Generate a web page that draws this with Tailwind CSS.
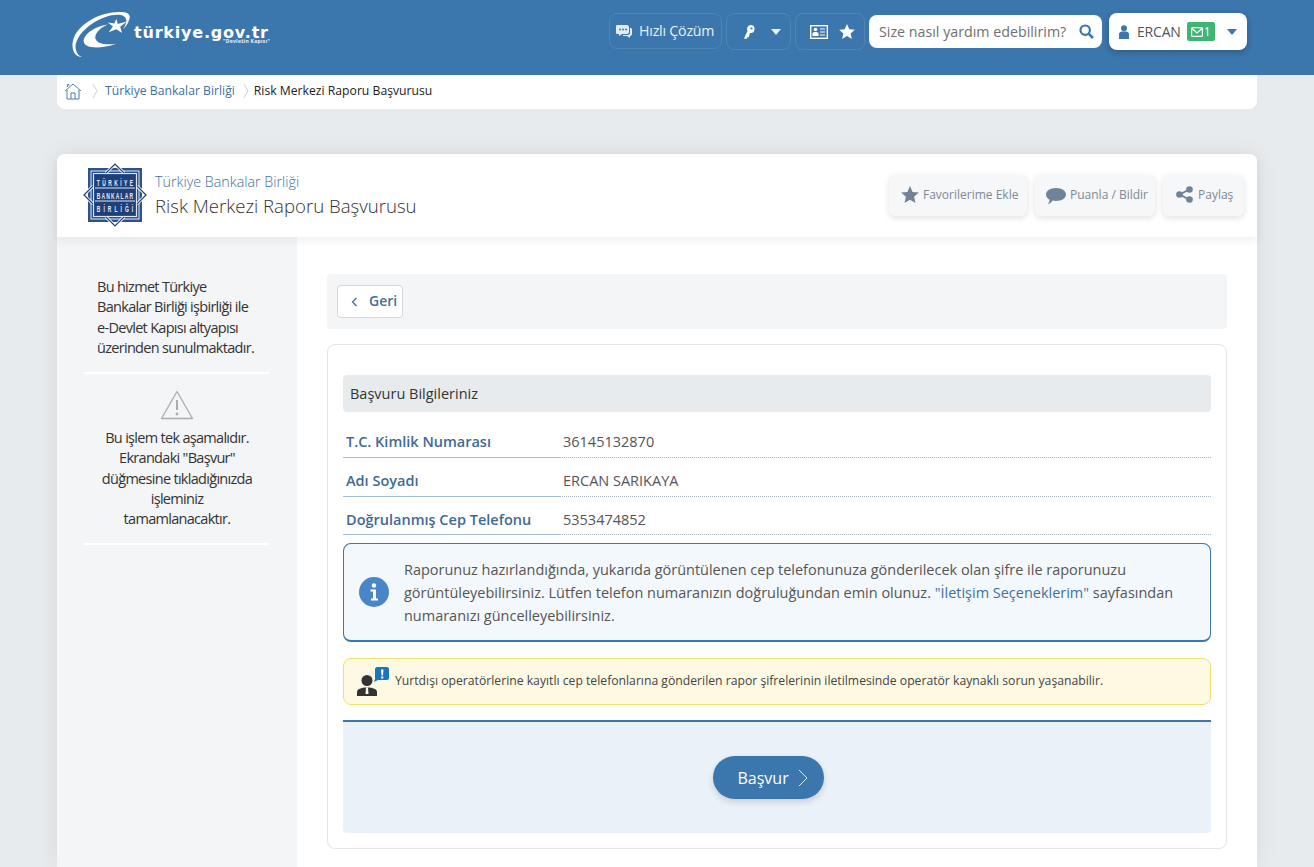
<!DOCTYPE html>
<html lang="tr">
<head>
  <meta charset="UTF-8">
  <meta name="viewport" content="width=device-width, initial-scale=1.0">
  <title>Risk Merkezi Raporu Başvurusu</title>
  <script src="https://cdn.jsdelivr.net/npm/@tailwindcss/browser@4"></script>
</head>
<body class="bg-[#e8ebed] font-['Open_Sans',sans-serif] h-[867px] overflow-hidden text-[#444]">
  <!-- Header -->
  <header class="bg-[#3b76ad] h-[75px]">
    <div class="w-[1200px] mx-auto flex items-start relative h-full">
      <a class="flex items-start ml-[13px] mt-[10px] relative w-[205px] h-[50px]">
        <svg width="60" height="46" viewBox="0 0 62 48" class="mt-[2px] ml-[1px]">
          <path d="M10 47C2 46 -1 36 3 26C9 12 30 0 50 0C59 -0.500 63 3 60 9C59 12 57 15 54 18C58 12 59 7 54 4C48 1 34 4 22 12C10 20 2 32 5 40C6 44 8 46 11 47Z" fill="#fff"/>
          <path d="M38 13C24 15 12 24 13 31C14 38 30 39 47 33C36 35 26 33 25 27C25 21 31 16 38 13Z" fill="#fff"/>
          <path d="M47 7L48.500 12.500L58 10L51 15.500L53 22L47 18L39 21L43.500 15L38 11L45 12Z" fill="#fff"/>
        </svg>
        <span class="absolute left-[64px] top-[18px] font-['DejaVu_Sans',sans-serif] font-bold text-[16px] leading-[10px] tracking-[0.8px] text-white whitespace-nowrap">türkiye.gov.tr</span>
        <span class="absolute left-[153px] top-[29px] text-[5px] leading-[4px] tracking-[0.3px] text-white/90 whitespace-nowrap font-bold">"Devletin Kapısı"</span>
      </a>
      <div class="ml-auto mr-[10px] mt-[13px] flex items-start">
        <a class="h-[36px] w-[113px] border border-white/10 rounded-[8px] flex items-center pl-[5px] text-[#e9f0f6] text-[14.200px] tracking-[-0.2px] whitespace-nowrap">
          <svg width="18" height="18" viewBox="0 0 18 18" class="mr-[6px]"><path d="M2 3H12C13 3 14 4 14 5V10C14 11 13 12 12 12H7L4 14V12H2C1 12 1 11 1 10V5C1 4 1 3 2 3Z" fill="#e3ebf3"/><path d="M15 6H16C17 6 17 7 17 8V12C17 13 16 14 15 14V16L12 14H8L8 13H13C14 13 15 12 15 11Z" fill="#e3ebf3"/><circle cx="5" cy="7.500" r="1" fill="#3b76ad"/><circle cx="8" cy="7.500" r="1" fill="#3b76ad"/><circle cx="11" cy="7.500" r="1" fill="#3b76ad"/></svg>
          Hızlı Çözüm
        </a>
        <a class="ml-[4px] h-[37px] w-[65px] border border-white/10 rounded-[8px] flex items-center pl-[15px]">
          <svg width="14" height="16" viewBox="0 0 14 16"><path d="M9 1A4 4 0 0 0 5.500 7L2 14.500L4.500 15L5.500 13L6.500 13.500L8 9A4 4 0 1 0 9 1Z" fill="#fff"/><circle cx="9.500" cy="4.500" r="1.100" fill="#3b76ad"/></svg>
          <svg width="10" height="6" viewBox="0 0 10 6" class="ml-[15px]"><path d="M0 0H10L5 6Z" fill="#e9f0f6"/></svg>
        </a>
        <a class="ml-[4px] h-[37px] w-[70px] border border-white/10 rounded-[8px] flex items-center pl-[14px]">
          <svg width="18" height="14" viewBox="0 0 18 14"><rect x="0.700" y="0.700" width="16.600" height="12.600" fill="none" stroke="#fff" stroke-width="1.400"/><circle cx="5.500" cy="4.500" r="1.800" fill="#fff"/><path d="M2.500 11V8.500C2.500 7.500 4 7 5.500 7C7 7 8.500 7.500 8.500 8.500V11Z" fill="#fff"/><path d="M10 4H15M10 7H15M10 10H15" stroke="#fff" stroke-width="1.200"/></svg>
          <svg width="16" height="15" viewBox="0 0 24 23" class="ml-[11px]"><path d="M12 0L15.500 8L24 8.800L17.500 14.500L19.500 23L12 18.500L4.500 23L6.500 14.500L0 8.800L8.500 8Z" fill="#fff"/></svg>
        </a>
        <div class="ml-[4px] mt-[2px] h-[33px] w-[233px] bg-white rounded-[8px] flex items-center pl-[10px] pr-[8px] text-[14.250px] text-[#6f6f6f] whitespace-nowrap">
          <span>Size nasıl yardım edebilirim?</span>
          <svg width="15" height="15" viewBox="0 0 15 15" class="ml-auto"><circle cx="6.200" cy="6.200" r="4.700" fill="none" stroke="#3b76ad" stroke-width="2.200"/><path d="M9.800 9.800L14 14" stroke="#3b76ad" stroke-width="2.600"/></svg>
        </div>
        <div class="ml-[7px] h-[37px] w-[138px] bg-white rounded-[8px] shadow-[0_2px_6px_rgba(0,0,0,0.25)] flex items-center pl-[10px] text-[14px] text-[#555] whitespace-nowrap">
          <svg width="10" height="14" viewBox="0 0 10 14"><circle cx="5" cy="3.200" r="3" fill="#3b76ad"/><path d="M0 14V9C0 7 2 6.500 5 6.500C8 6.500 10 7 10 9V14Z" fill="#3b76ad"/></svg>
          <span class="ml-[8px] tracking-[-0.2px]">ERCAN</span>
          <span class="ml-[6px] h-[19px] w-[28px] rounded-[2px] bg-[#3fb573] flex items-center justify-center text-white text-[12px] gap-[1px]">
            <svg width="12" height="10" viewBox="0 0 12 10"><rect x="0.600" y="0.600" width="10.800" height="8.800" rx="1" fill="none" stroke="#fff" stroke-width="1.200"/><path d="M1 1.500L6 6L11 1.500" fill="none" stroke="#fff" stroke-width="1.200"/></svg>
            1
          </span>
          <svg width="10" height="6" viewBox="0 0 10 6" class="ml-[12px]"><path d="M0 0H10L5 6Z" fill="#3b76ad"/></svg>
        </div>
      </div>
    </div>
  </header>

  <div class="w-[1200px] mx-auto">
    <!-- Breadcrumb -->
    <nav class="bg-white h-[34px] rounded-b-[8px] flex items-center pb-[2px] pl-[7px] text-[12.200px] whitespace-nowrap">
      <svg width="18" height="18" viewBox="0 0 18 18" fill="none" stroke="#4f7ea8" stroke-width="1"><path d="M1 9L9 2L17 9M3 8V17H15V8M7 17V11H11V17M3.500 5V2.500H5V3.700"/></svg>
      <svg width="6" height="18" viewBox="0 0 6 18" fill="none" stroke="#ccd3d9" class="ml-[10px]"><path d="M1 2L5 9L1 16"/></svg>
      <a class="ml-[7px] text-[#3f709e]">Türkiye Bankalar Birliği</a>
      <svg width="6" height="18" viewBox="0 0 6 18" fill="none" stroke="#ccd3d9" class="ml-[8px]"><path d="M1 2L5 9L1 16"/></svg>
      <span class="ml-[5px] text-[#222]">Risk Merkezi Raporu Başvurusu</span>
    </nav>

    <!-- Main card -->
    <main class="mt-[45px] bg-white rounded-t-[8px] shadow-[0_0_24px_rgba(0,0,0,0.07)]">
      <div class="h-[83px] relative z-10 bg-white rounded-t-[8px] shadow-[0_4px_10px_rgba(0,0,0,0.06)] flex items-start pl-[26px]">
        <svg width="64" height="64" viewBox="0 0 64 64" class="mt-[9px] shrink-0">
          <rect x="5" y="5" width="54" height="54" fill="#2c5290"/>
          <rect x="8" y="8" width="48" height="48" fill="none" stroke="#dfe8f3" stroke-width="1"/>
          <rect x="10.500" y="10.500" width="43" height="43" fill="none" stroke="#dfe8f3" stroke-width="1"/>
          <rect x="12" y="12" width="40" height="40" fill="#1f3f78"/>
          <path d="M23 10L32 1L41 10M10 23L1 32L10 41M54 23L63 32L54 41M23 54L32 63L41 54" fill="none" stroke="#fff" stroke-width="3"/>
          <path d="M23 10L32 1L41 10M10 23L1 32L10 41M54 23L63 32L54 41M23 54L32 63L41 54" fill="none" stroke="#1f4178" stroke-width="1.200"/>
          <path d="M12 25H52M12 38H52" stroke="#dfe8f3" stroke-width="1"/>
          <g font-family="Liberation Sans" font-weight="700" font-size="9" fill="#e8eef6" text-anchor="middle">
            <text transform="translate(32 22.500) scale(0.55 1)" textLength="66" lengthAdjust="spacing">TÜRKİYE</text>
            <text transform="translate(32 35.500) scale(0.55 1)" textLength="66" lengthAdjust="spacing">BANKALAR</text>
            <text transform="translate(32 48.500) scale(0.55 1)" textLength="66" lengthAdjust="spacing">BİRLİĞİ</text>
          </g>
        </svg>
        <div class="ml-[8px] mt-[18px]">
          <div class="text-[14.300px] leading-[19px] font-light text-[#3f709e]">Türkiye Bankalar Birliği</div>
          <h1 class="mt-[2px] text-[18.600px] leading-[25px] font-light text-[#333]">Risk Merkezi Raporu Başvurusu</h1>
        </div>
        <div class="ml-auto mr-[13px] mt-[21px] flex gap-[8px] text-[12px] text-[#7d8a96] whitespace-nowrap">
          <a class="h-[41px] w-[138px] bg-[#f5f7f9] rounded-[6px] shadow-[0_2px_6px_rgba(0,0,0,0.12)] flex items-center pb-[2px] pl-[12px] gap-[4px]">
            <svg width="18" height="17" viewBox="0 0 24 23"><path d="M12 0L15.500 8L24 8.800L17.500 14.500L19.500 23L12 18.500L4.500 23L6.500 14.500L0 8.800L8.500 8Z" fill="#6f8496"/></svg>
            Favorilerime Ekle
          </a>
          <a class="h-[41px] w-[120px] bg-[#f5f7f9] rounded-[6px] shadow-[0_2px_6px_rgba(0,0,0,0.12)] flex items-center pb-[2px] pl-[11px] gap-[4px]">
            <svg width="20" height="17" viewBox="0 0 20 17" class="mt-[3px]"><path d="M10 0C15.500 0 20 2.800 20 6.500C20 10.200 15.500 13 10 13C8.800 13 7.700 12.900 6.700 12.600C5.500 14.500 3.500 16 1.500 16.500C2.800 15 3.500 13.500 3.600 11.700C1.400 10.500 0 8.600 0 6.500C0 2.800 4.500 0 10 0Z" fill="#6f8496"/></svg>
            Puanla / Bildir
          </a>
          <a class="h-[41px] w-[81px] bg-[#f5f7f9] rounded-[6px] shadow-[0_2px_6px_rgba(0,0,0,0.12)] flex items-center pb-[2px] pl-[13px] gap-[5px]">
            <svg width="17" height="17" viewBox="0 0 17 17"><path d="M13 3.500L4 8.500L13 13.500" fill="none" stroke="#6f8496" stroke-width="2"/><circle cx="13.500" cy="3.500" r="3.300" fill="#6f8496"/><circle cx="3.500" cy="8.500" r="3.300" fill="#6f8496"/><circle cx="13.500" cy="13.500" r="3.300" fill="#6f8496"/></svg>
            Paylaş
          </a>
        </div>
      </div>

      <div class="flex h-[630px]">
        <!-- Sidebar -->
        <aside class="w-[240px] bg-[#f3f5f7] px-[27px] pt-[40px] text-[14.500px] leading-[20.300px] text-[#333] tracking-[-0.7px]">
          <p class="px-[13px] pb-[14px] border-b-2 border-white">Bu hizmet Türkiye Bankalar Birliği işbirliği ile e-Devlet Kapısı altyapısı üzerinden sunulmaktadır.</p>
          <div class="pb-[13px] border-b-2 border-white text-center pt-[16px]">
            <svg width="34" height="30" viewBox="0 0 34 30" fill="none" class="mx-auto"><path d="M17 1.500L32.500 28.500H1.500Z" stroke="#a9adb1" stroke-width="1.300" stroke-linejoin="round"/><path d="M17 10V20" stroke="#a9adb1" stroke-width="2"/><circle cx="17" cy="24" r="1.400" fill="#a9adb1"/></svg>
            <p class="mt-[8px] mx-auto w-[160px]">Bu işlem tek aşamalıdır. Ekrandaki "Başvur" düğmesine tıkladığınızda işleminiz tamamlanacaktır.</p>
          </div>
        </aside>

        <!-- Content -->
        <section class="flex-1 px-[30px] pt-[37px]">
          <div class="h-[55px] bg-[#f3f5f7] rounded-[4px] flex items-center pl-[10px]">
            <a class="h-[33px] w-[66px] bg-white border border-[#d3d8dc] rounded-[4px] flex items-center pb-[2px] pl-[13px] text-[14px] font-semibold text-[#3f709e]">
              <svg width="7" height="10" viewBox="0 0 7 10" fill="none" stroke="#3f709e" stroke-width="1.300" class="mt-[2px]"><path d="M5.500 1L1.500 5L5.500 9"/></svg>
              <span class="ml-[11px]">Geri</span>
            </a>
          </div>

          <div class="mt-[15px] h-[505px] border border-[#e3e6e9] rounded-[8px] px-[15px] pt-[30px]">
            <h2 class="h-[37px] bg-[#e8ebed] rounded-[4px] flex items-center pl-[7px] text-[14.500px] text-[#333]">Başvuru Bilgileriniz</h2>

            <dl class="mt-[7px] text-[14.500px]">
              <div class="flex h-[39px]">
                <dt class="w-[217px] pl-[3px] pt-[12px] font-semibold text-[#3f6a96] border-b border-[#a5c0d6]">T.C. Kimlik Numarası</dt>
                <dd class="flex-1 pl-[3px] pt-[12px] text-[#555] border-b border-dotted border-[#a9b8c6]">36145132870</dd>
              </div>
              <div class="flex h-[39px]">
                <dt class="w-[217px] pl-[3px] pt-[12px] font-semibold text-[#3f6a96] border-b border-[#a5c0d6]">Adı Soyadı</dt>
                <dd class="flex-1 pl-[3px] pt-[12px] text-[#555] border-b border-dotted border-[#a9b8c6]">ERCAN SARIKAYA</dd>
              </div>
              <div class="flex h-[38px]">
                <dt class="w-[217px] pl-[3px] pt-[12px] font-semibold text-[#3f6a96] border-b border-[#a5c0d6] whitespace-nowrap">Doğrulanmış Cep Telefonu</dt>
                <dd class="flex-1 pl-[3px] pt-[12px] text-[#555] border-b border-dotted border-[#a9b8c6]">5353474852</dd>
              </div>
            </dl>

            <div class="mt-[8px] h-[99px] bg-[#f3f8fc] border border-b-2 border-[#3b76ad] rounded-[8px] flex items-center pl-[15px] pr-[20px]">
              <svg width="30" height="30" viewBox="0 0 30 30" class="shrink-0"><circle cx="15" cy="15" r="15" fill="#4a86c5"/><circle cx="15" cy="8.500" r="2.200" fill="#fff"/><path d="M11.500 12.500H17V21.500H19V23.500H12V21.500H14V14.500H11.500Z" fill="#fff"/></svg>
              <p class="ml-[15px] text-[14.480px] leading-[23px] text-[#555]">Raporunuz hazırlandığında, yukarıda görüntülenen cep telefonunuza gönderilecek olan şifre ile raporunuzu görüntüleyebilirsiniz. Lütfen telefon numaranızın doğruluğundan emin olunuz. <a class="text-[#3f709e]">"İletişim Seçeneklerim"</a> sayfasından numaranızı güncelleyebilirsiniz.</p>
            </div>

            <div class="mt-[16px] h-[47px] bg-[#fef9e3] border border-[#f2e06a] rounded-[8px] flex items-center pl-[13px] text-[12.200px] text-[#444] whitespace-nowrap">
              <svg width="32" height="29" viewBox="0 0 32 29" class="shrink-0"><circle cx="10" cy="13.500" r="5.500" fill="#333"/><path d="M0 29V25C0 22 4 20.500 10 20.500C16 20.500 20 22 20 25V29Z" fill="#333"/><path d="M9 20.500H11L11.500 27H8.500Z" fill="#fef9e3"/><path d="M18 2C18 1 19 0 20 0H30C31 0 32 1 32 2V11C32 12 31 13 30 13H21L17 15L18 12Z" fill="#1b75bb"/><path d="M24 2.500H26.500L26 8.500H24.500ZM24.200 9.500H26.300V11.500H24.200Z" fill="#fff"/></svg>
              <span class="ml-[6px]">Yurtdışı operatörlerine kayıtlı cep telefonlarına gönderilen rapor şifrelerinin iletilmesinde operatör kaynaklı sorun yaşanabilir.</span>
            </div>

            <div class="mt-[15px] h-[113px] bg-[#eaf1f9] border-t-2 border-[#3b76ad] rounded-b-[4px] flex items-center justify-center pr-[18px]">
              <button class="h-[43px] w-[111px] bg-[#3b76ad] rounded-full shadow-[0_3px_6px_rgba(0,0,0,0.15)] flex items-center pl-[25px] text-[16px] text-white">
                Başvur
                <svg width="10" height="18" viewBox="0 0 10 18" fill="none" stroke="#dfe9f3" stroke-width="1" class="ml-[9px]"><path d="M1 1L9 9L1 17"/></svg>
              </button>
            </div>
          </div>
        </section>
      </div>
    </main>
  </div>
</body>
</html>
